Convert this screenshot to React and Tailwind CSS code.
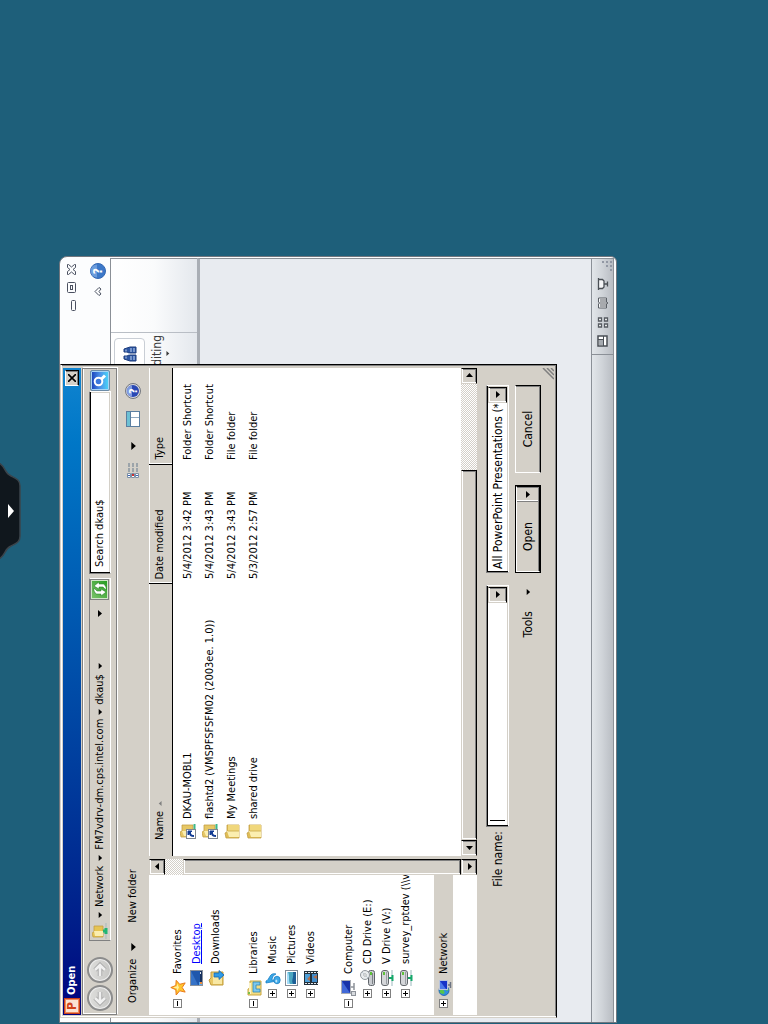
import React from "react";
import clsx from "clsx";

const raised =
  "bg-[#d4d0c8] border border-t-[#d4d0c8] border-l-[#d4d0c8] border-r-black border-b-black shadow-[inset_1px_1px_#fff,inset_-1px_-1px_#808080]";
const raisedButton =
  "bg-[#d4d0c8] border border-t-white border-l-white border-r-black border-b-black shadow-[inset_-1px_-1px_#808080]";
const sunken =
  "bg-white border border-t-[#808080] border-l-[#808080] border-r-white border-b-white shadow-[inset_1px_1px_#000,inset_-1px_-1px_#d4d0c8]";
const dither =
  "bg-[repeating-conic-gradient(#d4d0c8_0_25%,#fff_0_50%)] bg-size-[2px_2px]";

const tree = [
  {
    label: "Favorites",
    icon: "star",
    mark: "minus",
    items: [
      { label: "Desktop", icon: "desktop", active: true },
      { label: "Downloads", icon: "downloads" },
    ],
  },
  {
    label: "Libraries",
    icon: "libraries",
    mark: "minus",
    items: [
      { label: "Music", icon: "music", mark: "plus" },
      { label: "Pictures", icon: "pictures", mark: "plus" },
      { label: "Videos", icon: "videos", mark: "plus" },
    ],
  },
  {
    label: "Computer",
    icon: "computer",
    mark: "minus",
    items: [
      { label: "CD Drive (E:)", icon: "cd", mark: "plus" },
      { label: "V Drive (V:)", icon: "netdrive", mark: "plus" },
      { label: "survey_rptdev (\\\\v", icon: "netdrive", mark: "plus" },
    ],
  },
  { label: "Network", icon: "network", mark: "plus", selected: true, items: [] },
];

const files = [
  { name: "DKAU-MOBL1", date: "5/4/2012 3:42 PM", type: "Folder Shortcut", icon: "shortcut" },
  {
    name: "flashtd2 (VMSPFSFSFM02 (2003ee. 1.0))",
    date: "5/4/2012 3:43 PM",
    type: "Folder Shortcut",
    icon: "shortcut",
  },
  { name: "My Meetings", date: "5/4/2012 3:43 PM", type: "File folder", icon: "folder" },
  { name: "shared drive", date: "5/3/2012 2:57 PM", type: "File folder", icon: "folder" },
];

const drawings = {
  star: (
    <>
      <path
        d="M8.500.8l2 5 5.200.4-4 3.500 1.400 5.500-4.600-3-4.600 3 1.300-5.500L1 6.200l5.300-.4z"
        fill="#ffc62e"
        stroke="#ea7a1a"
      />
      <path d="M8.500 3l1.200 3.800 2.800.3L8.500 9 5 7.100l2.400-.3z" fill="#fff0a0" />
    </>
  ),
  desktop: (
    <>
      <rect x="0.500" y="1.500" width="15" height="12" fill="#1f57ac" stroke="#8b929c" />
      <path d="M1 2h14L1 9z" fill="#3673c8" />
      <rect x="1" y="11" width="14" height="2" fill="#17325f" />
      <rect x="1" y="10" width="3" height="3" fill="#5fa8e8" />
      <rect x="2" y="11" width="2" height="2" fill="#f08c3c" />
      <rect x="12" y="11" width="2" height="1" fill="#dfe9f5" />
    </>
  ),
  downloads: (
    <>
      <path d="M1 3l5-2 2 2h6v12H1z" fill="#e8c765" stroke="#c19b3a" />
      <path d="M2 5h11v9H2z" fill="#f8e8a4" />
      <path d="M9 6h4v5h2.500L11 16l-4.500-5H9z" fill="#2f9be8" stroke="#1565ac" strokeWidth="0.800" />
    </>
  ),
  libraries: (
    <>
      <path d="M1 2h6l1 2h7v11H1z" fill="#f3dc83" stroke="#c9a63f" />
      <path d="M2 3h11v2H2z" fill="#fcf3c4" />
      <path d="M2 2h2v2H2z" fill="#7cc04a" />
      <path d="M4 14V7h10v7h-3v-4H7v4z" fill="#7cc8ef" stroke="#2b86b8" strokeWidth="0.800" />
    </>
  ),
  music: (
    <>
      <path d="M3 1h2c1 4 9 3 7 10-1-3-4-4-6.500-4L7 12H5z" fill="#38a6e6" stroke="#1c7fc4" strokeWidth="0.800" />
      <ellipse cx="6" cy="12" rx="3.800" ry="3.200" fill="#3fa9e8" stroke="#1c7fc4" strokeWidth="0.800" />
      <ellipse cx="5" cy="11.300" rx="1.600" ry="1" fill="#bfe6fb" />
    </>
  ),
  pictures: (
    <>
      <rect x="0.500" y="1.500" width="15" height="12" fill="#fff" stroke="#818b96" />
      <rect x="2" y="3" width="12" height="9" fill="#a4dcf8" />
      <path d="M2 6c4-2 8 0 12-2v8H2z" fill="#4ba6c0" />
      <path d="M2 9c4-2 6 1 12 0v3H2z" fill="#1d5f96" />
    </>
  ),
  videos: (
    <>
      <rect x="1" y="1" width="14" height="14" fill="#23303a" />
      <rect x="4" y="2" width="8" height="5" fill="#4d9fd8" />
      <rect x="4" y="9" width="8" height="5" fill="#3f8ccc" />
      <path d="M5 7l2-3 3 3zM7 14l2-4 2 4z" fill="#b46d48" />
      <path d="M2.500 2v13M13.500 2v13" stroke="#e4e9ee" strokeDasharray="2 1" />
    </>
  ),
  computer: (
    <>
      <rect x="2.500" y="0.500" width="13" height="9" fill="#1733a8" stroke="#a9adb5" />
      <path d="M3 1h12L3 9z" fill="#4169d8" />
      <path d="M9 10v3M6 13h7" stroke="#8d9299" strokeWidth="1.500" />
      <rect x="0.500" y="10.500" width="4" height="4" fill="#d8dbdf" stroke="#8d9299" />
    </>
  ),
  cd: (
    <>
      <rect x="0.500" y="8.500" width="15" height="6" rx="2" fill="#c9ccd0" stroke="#5f6469" />
      <path d="M2 12.500h11" stroke="#7d8287" />
      <rect x="11" y="10" width="3" height="2" fill="#5fc13a" />
      <circle cx="11" cy="5" r="4.500" fill="#e9ecee" stroke="#93989e" />
      <path d="M11 5l3-3M11 5l-3 3" stroke="#bfc8d0" />
      <circle cx="11" cy="5" r="1.300" fill="#fff" stroke="#888d92" strokeWidth="0.600" />
    </>
  ),
  netdrive: (
    <>
      <rect x="0.500" y="2.500" width="15" height="7" rx="2.500" fill="#d4d6d9" stroke="#63676c" />
      <path d="M2 7.500h12" stroke="#9a9ea3" />
      <rect x="11" y="4" width="3" height="2" fill="#5fc13a" />
      <path d="M0 13h16" stroke="#9cb8bd" />
      <path d="M8 10v3M5 13.500h6" stroke="#15a86a" strokeWidth="2" />
    </>
  ),
  network: (
    <>
      <circle cx="5.500" cy="8" r="5" fill="#2f8fe0" stroke="#1a5aa8" strokeWidth="0.800" />
      <path d="M3 4c3-1 4 1 3 3S2 9 2 7zM5 10c2 0 3 2 1 3z" fill="#58c64a" />
      <rect x="6.500" y="3.500" width="9" height="8" fill="#1733c8" stroke="#b8c4dc" />
      <path d="M7 4h8L7 10z" fill="#4b78ea" />
      <path d="M11 12v2M8 14.500h6" stroke="#6b7382" strokeWidth="1.500" />
    </>
  ),
  folder: (
    <>
      <path d="M1 2l5-1 1 2h7v12H1z" fill="#e0bd55" stroke="#c3a044" strokeWidth="0.800" />
      <path d="M2 5l6-2v12H2z" fill="#fbeeb0" />
      <path d="M8 4h6v11H8z" fill="#f0d77c" />
      <path d="M8 4v11" stroke="#c9a84b" strokeWidth="0.800" />
    </>
  ),
  shortcut: (
    <>
      <path d="M2 1l5-1 1 2h6v11H2z" fill="#e6c765" stroke="#c3a044" strokeWidth="0.800" />
      <path d="M3 4l5-2v10H3z" fill="#fbeeb0" />
      <path d="M9 14.500h6" stroke="#3db88a" strokeWidth="2" />
      <rect x="0.500" y="6.500" width="9" height="9" fill="#fff" stroke="#7f868e" />
      <path d="M3 14c0-3 1-4 3-4" stroke="#123c94" strokeWidth="2" />
      <path d="M4 8h4v4z" fill="#123c94" stroke="#123c94" />
    </>
  ),
  netfolder: (
    <>
      <path d="M2 1l4-1 1 2h6v9H2z" fill="#e6c452" stroke="#c3a044" strokeWidth="0.800" />
      <path d="M3 3l5-1v9H3z" fill="#fbeeb0" />
      <path d="M0 14h16" stroke="#a9b9bb" />
      <path d="M8 11v3M5 14h6" stroke="#22b573" strokeWidth="3" />
    </>
  ),
  help: (
    <>
      <circle cx="8" cy="8" r="7.500" fill="#d8d8dc" stroke="#73777f" />
      <circle cx="8" cy="8" r="6" fill="#2948b4" />
      <path d="M2.500 7a5.500 5.500 0 0 1 11 0z" fill="#7f9ae0" />
      <text x="8" y="12" textAnchor="middle" fontSize="11" fontWeight="bold" fill="#fff">
        ?
      </text>
    </>
  ),
  helpBlue: (
    <>
      <circle cx="8" cy="8" r="7.500" fill="#3c78c8" stroke="#3468b4" />
      <path d="M1.500 7a6.500 6.500 0 0 1 13 0z" fill="#6b9cdc" />
      <text x="8" y="12" textAnchor="middle" fontSize="12" fontWeight="bold" fill="#fff">
        ?
      </text>
    </>
  ),
  preview: (
    <>
      <rect x="0.500" y="1.500" width="15" height="13" fill="#fff" stroke="#5a7ea0" />
      <rect x="1" y="2" width="14" height="3" fill="#6cc0d4" />
      <path d="M1 5.500h14" stroke="#5a7ea0" />
      <path d="M9.500 6v8" stroke="#8fa8bf" />
    </>
  ),
  views: (
    <>
      <path d="M.5 2.500h4v3h-4zM.5 6.500h4v3h-4zM.5 10.500h4v3h-4z" fill="#fff" stroke="#7b8fa5" />
      <path d="M6 4h10M6 8h10M6 12h10" stroke="#65798c" strokeDasharray="4 1" />
      <rect x="2" y="7" width="2" height="2" fill="#d03030" />
      <rect x="2" y="3" width="1" height="2" fill="#3a64b4" />
      <rect x="2" y="11" width="1" height="2" fill="#3a64b4" />
    </>
  ),
  binoculars: (
    <>
      <path d="M3 2h3v3l1 2v7H1V8zM10 2h3l2 6v6H9V7l1-2z" fill="#2c56a4" stroke="#1d3c7c" />
      <path d="M2 9h4M10 9h4M3.500 4h2M10.500 4h2M7 7h2M2 12h4M10 12h4" stroke="#c3d6f2" />
    </>
  ),
  normal: (
    <>
      <path d="M1 1h10v9H1z" fill="#fff" stroke="#4a4f55" strokeWidth="1.500" />
      <path d="M7.500 1v5M1 6.500h10" stroke="#4a4f55" />
      <path d="M2 2h5v4H2z" fill="#a5aab0" />
    </>
  ),
  sorter: (
    <path
      d="M1 1.500h3v3H1zM7 1.500h3v3H7zM1 7.500h3v3H1zM7 7.500h3v3H7z"
      fill="#fff"
      stroke="#555a60"
      strokeWidth="1.300"
    />
  ),
  reading: (
    <path
      d="M1 1.500h4l1 1 1-1h4v8H7l-1 1.500-1-1.500H1zM6 2.500v8M2 4h3M2 6h3M2 8h3M7 4h3M7 6h3M7 8h3"
      fill="#f4f5f7"
      stroke="#5a5f65"
    />
  ),
  slideshow: (
    <path
      d="M0 1.500h12M1.500 2v3.500L3 7h6l1.500-1.500V2M6 7v3M3.500 10.500h5"
      fill="#f4f5f7"
      stroke="#4a4f55"
      strokeWidth="1.300"
    />
  ),
};

const smallIcons = ["normal", "sorter", "reading", "slideshow"];

const Icon = ({ name, className = "size-4" }) => (
  <svg
    viewBox={smallIcons.includes(name) ? "0 0 12 12" : "0 0 16 16"}
    className={clsx("shrink-0", className)}
    fill="none"
    aria-hidden="true"
  >
    {drawings[name]}
  </svg>
);

const arrowPaths = {
  down: "M0 2h7L3.500 6z",
  up: "M0 5h7L3.500 1z",
  right: "M2 0v7l4-3.500z",
  left: "M5 0v7L1 3.500z",
};

const Arrow = ({ dir = "down", className = "size-[7px]" }) => (
  <svg viewBox="0 0 7 7" className={clsx("shrink-0", className)} aria-hidden="true">
    <path d={arrowPaths[dir]} fill="currentColor" />
  </svg>
);

const ScrollButton = ({ dir, label }) => (
  <button aria-label={label} className={clsx("flex size-4 shrink-0 items-center justify-center", raised)}>
    <Arrow dir={dir} />
  </button>
);

const Expander = ({ mark }) => (
  <button
    aria-label={mark === "plus" ? "Expand" : "Collapse"}
    className="flex size-[9px] shrink-0 items-center justify-center border border-[#808080] bg-white"
  >
    <svg viewBox="0 0 5 5" className="size-[5px]" aria-hidden="true">
      <path d={mark === "plus" ? "M0 2.500h5M2.500 0v5" : "M0 2.500h5"} stroke="#000" />
    </svg>
  </button>
);

const TreeRow = ({ item, child }) => (
  <div
    className={clsx(
      "flex h-[19px] items-center gap-[2px] whitespace-nowrap",
      child ? "pl-[17px]" : "pl-[7px]",
      item.selected && "bg-[#d4d0c8]"
    )}
  >
    <span className="flex w-[10px] shrink-0">{item.mark && <Expander mark={item.mark} />}</span>
    <Icon name={item.icon} />
    <a
      href="#"
      className={clsx("pl-1", item.active ? "text-[#0000ff] underline" : "text-black")}
    >
      {item.label}
    </a>
  </div>
);

const NavPane = () => (
  <div className="flex w-[156px] shrink-0">
    <nav className="flex flex-1 flex-col gap-[19px] overflow-hidden bg-white pt-[19px]">
      {tree.map((group) => (
        <div key={group.label}>
          <TreeRow item={group} />
          {group.items.map((item) => (
            <TreeRow key={item.label} item={item} child />
          ))}
        </div>
      ))}
    </nav>
    <div className="flex w-4 flex-col">
      <ScrollButton dir="up" label="Scroll up" />
      <div className={clsx("h-[18px]", dither)} />
      <div className={clsx("flex-1", raised)} />
      <ScrollButton dir="down" label="Scroll down" />
    </div>
  </div>
);

const FileList = () => (
  <div className="flex min-w-0 flex-1 flex-col bg-white">
    <div className="flex-1">
      <table className="w-full table-fixed border-collapse text-left">
        <colgroup>
          <col className="w-[272px]" />
          <col className="w-[119px]" />
          <col />
        </colgroup>
        <thead>
          <tr className="h-[23px] bg-[#d4d0c8] shadow-[inset_0_1px_#fff]">
            <th className="border-r border-b border-black pl-4 font-normal">
              <span className="flex items-center gap-[5px]">
                Name
                <Arrow dir="up" className="size-[5px] text-[#808080]" />
              </span>
            </th>
            <th className="border-r border-b border-black pl-1 font-normal shadow-[inset_1px_1px_#fff]">
              Date modified
            </th>
            <th className="border-b border-black pl-[5px] font-normal shadow-[inset_1px_1px_#fff]">
              Type
            </th>
          </tr>
        </thead>
        <tbody className="before:block before:h-1">
          {files.map((file) => (
            <tr key={file.name} className="h-[22px] whitespace-nowrap">
              <td className="pl-[17px]">
                <span className="flex items-center gap-1">
                  <Icon name={file.icon} />
                  {file.name}
                </span>
              </td>
              <td className="pl-[5px]">{file.date}</td>
              <td className="pl-[5px]">{file.type}</td>
            </tr>
          ))}
        </tbody>
      </table>
    </div>
    <div className="flex h-4">
      <ScrollButton dir="left" label="Scroll left" />
      <div className={clsx("flex-[370]", raised)} />
      <div className={clsx("flex-[86]", dither)} />
      <ScrollButton dir="right" label="Scroll right" />
    </div>
  </div>
);

const RoundButton = ({ label, d }) => (
  <button
    aria-label={label}
    className="flex size-[26px] items-center justify-center rounded-full border-2 border-[#8c8c8c] bg-linear-to-b from-[#dededc] to-[#c6c6c4] shadow-[inset_0_0_0_1px_#eee]"
  >
    <svg viewBox="0 0 16 16" className="size-4" fill="none" aria-hidden="true">
      <path d={d} stroke="#acacac" strokeWidth="4.500" />
      <path d={d} stroke="#f0f0f0" strokeWidth="2.500" />
    </svg>
  </button>
);

const AddressBar = () => (
  <div className="flex h-[35px] items-center border border-[#808080] pr-px shadow-[inset_1px_1px_#fff,1px_1px_#fff]">
    <div className="flex w-[73px] shrink-0 gap-[2px] pl-[3px]">
      <RoundButton label="Back" d="M14 8H3M8 3L3 8l5 5" />
      <RoundButton label="Forward" d="M2 8h11M8 3l5 5-5 5" />
    </div>
    <div className="flex h-[22px] min-w-0 flex-1 items-center border border-t-[#808080] border-r-white border-b-white border-l-[#808080] pl-px">
      <Icon name="netfolder" />
      <div className="flex flex-1 items-center whitespace-nowrap">
        <Arrow className="mx-[5px] size-[6px]" />
        <a href="#">Network</a>
        <Arrow className="mx-[5px] size-[6px]" />
        <a href="#">FM7vdrv-dm.cps.intel.com</a>
        <Arrow className="mx-1 size-[6px]" />
        <a href="#">dkau$</a>
        <Arrow className="mx-[5px] size-[6px]" />
      </div>
      <Arrow />
      <button
        aria-label="Refresh"
        className="ml-[10px] flex h-[19px] w-[21px] items-center justify-center border border-[#808080] bg-linear-to-br from-[#7cc46c] to-[#189c18] shadow-[inset_0_0_0_1px_#d0e8c8]"
      >
        <svg viewBox="0 0 16 16" className="size-4" aria-hidden="true">
          <path
            d="M5 14L1 9h2V4l3-2h3L6 5v4h2zM11 2l4 5h-2v5l-3 2H7l3-3V7H8z"
            fill="#fff"
            stroke="#1c7a1c"
            strokeWidth="0.500"
          />
        </svg>
      </button>
    </div>
    <div className="ml-1 flex w-[204px] items-center">
      <input
        type="text"
        aria-label="Search dkau$"
        placeholder="Search dkau$"
        className={clsx("h-[22px] min-w-0 flex-1 pl-[6px] placeholder:text-black placeholder:opacity-100", sunken)}
      />
      <button
        aria-label="Search"
        className="flex h-5 w-[21px] items-center justify-center rounded-xs border border-[#6c8ca8] bg-linear-to-b from-[#1c3cb8] via-[#4c90e8] to-[#48d8f8] shadow-[inset_0_0_0_1px_#a8d4f4]"
      >
        <svg viewBox="0 0 16 16" className="size-4" fill="none" aria-hidden="true">
          <path d="M12.500 13l-4-4" stroke="#fff" strokeWidth="3" />
          <circle cx="6.500" cy="6.500" r="3.800" fill="#3a78dc" stroke="#fff" strokeWidth="2" />
        </svg>
      </button>
    </div>
  </div>
);

const Toolbar = () => (
  <div className="flex h-8 items-center pr-[15px] pl-3">
    <button className="flex items-center gap-2">
      Organize
      <Arrow className="size-2" />
    </button>
    <button className="ml-5">New folder</button>
    <button aria-label="Change view" className="ml-auto flex items-center gap-3">
      <Icon name="views" />
      <Arrow className="size-2" />
    </button>
    <button aria-label="Preview pane" className="ml-[15px]">
      <Icon name="preview" />
    </button>
    <button aria-label="Help" className="ml-3">
      <Icon name="help" />
    </button>
  </div>
);

const FooterPanel = () => (
  <div className="relative grid grid-cols-[1fr_242px_188px] gap-x-3 gap-y-[6px] pt-[9px] pr-[17px] pb-[13px] text-[12px]">
    <label htmlFor="file-name" className="-mr-2 flex items-center justify-end whitespace-nowrap">
      File name:
    </label>
    <div className={clsx("flex h-[23px] items-center p-px", sunken)}>
      <span className="ml-1 h-[15px] w-px bg-black" />
      <input id="file-name" type="text" className="h-full min-w-0 flex-1 bg-transparent" />
      <button aria-label="Recent files" className={clsx("flex h-[19px] w-4 items-center justify-center", raised)}>
        <Arrow />
      </button>
    </div>
    <div className={clsx("relative h-[23px] p-px", sunken)}>
      <select aria-label="File type" className="h-full w-full appearance-none overflow-hidden pr-[17px] pl-[2px]">
        <option>All PowerPoint Presentations (*</option>
      </select>
      <span
        className={clsx(
          "pointer-events-none absolute top-px right-px flex h-[19px] w-4 items-center justify-center",
          raised
        )}
      >
        <Arrow />
      </span>
    </div>
    <div className="col-span-2 flex h-[26px] items-center justify-end pr-1">
      <button className="flex items-center gap-4">
        Tools
        <Arrow className="size-[6px]" />
      </button>
    </div>
    <div className="flex h-[26px] gap-3">
      <div className="flex flex-1 border border-black">
        <div className={clsx("flex flex-1 pr-px pb-px", raisedButton)}>
          <button className="flex-1">Open</button>
          <button
            aria-label="Open options"
            className="flex w-[14px] items-center justify-center border-l border-[#808080] shadow-[inset_1px_0_#fff]"
          >
            <Arrow />
          </button>
        </div>
      </div>
      <button className={clsx("flex-1", raisedButton)}>Cancel</button>
    </div>
    <svg viewBox="0 0 12 12" className="absolute right-0 bottom-0 size-3" aria-hidden="true">
      <path d="M1 12L12 1M5 12l7-7M9 12l3-3" stroke="#808080" strokeWidth="1.500" />
    </svg>
  </div>
);

const OpenDialog = () => (
  <section
    aria-label="Open"
    className="absolute top-0 right-[107px] bottom-[59px] left-1 flex flex-col border border-t-[#d4d0c8] border-r-black border-b-black border-l-[#d4d0c8] bg-[#d4d0c8] p-[2px] pr-[3px] shadow-[inset_1px_1px_#fff,inset_-1px_-1px_#808080]"
  >
    <header className="flex h-[18px] shrink-0 items-center bg-linear-to-r from-[#00007e] to-[#1084d0] pr-[2px] pl-px font-bold text-white">
      <span className="flex size-4 items-center justify-center border border-[#c8401c] bg-[#fbe3d4] text-[12px] text-[#d2431a] shadow-[inset_0_0_0_1px_#ef8a5c]">
        P
      </span>
      <h1 className="flex-1 pl-[3px]">Open</h1>
      <button
        aria-label="Close"
        className={clsx("flex h-[14px] w-4 items-center justify-center text-black", raisedButton)}
      >
        <svg viewBox="0 0 8 8" className="size-2" aria-hidden="true">
          <path d="M0 0l8 8M8 0L0 8" stroke="#000" strokeWidth="1.600" />
        </svg>
      </button>
    </header>
    <div className="flex min-h-0 flex-1 flex-col pt-px">
      <AddressBar />
      <Toolbar />
      <div className="flex min-h-0 flex-1 gap-[3px]">
        <NavPane />
        <FileList />
      </div>
      <FooterPanel />
    </div>
  </section>
);

const Presentation = () => (
  <main className="relative flex h-full flex-col rounded-tr-lg rounded-br-md border border-[#70767e] bg-[#fcfdfe] pr-px pb-[2px]">
    <div className="flex h-[22px] items-center justify-end gap-[7px] pr-[6px] text-[#4a5060]">
      <button aria-label="Minimize">
        <svg viewBox="0 0 11 11" className="size-[11px]" fill="none" stroke="currentColor" aria-hidden="true">
          <rect x="0.500" y="5.500" width="10" height="4" rx="1" />
        </svg>
      </button>
      <button aria-label="Restore">
        <svg viewBox="0 0 11 11" className="size-[11px]" fill="none" stroke="currentColor" aria-hidden="true">
          <rect x="0.500" y="1.500" width="10" height="8" rx="1" />
          <rect x="3.500" y="4.500" width="4" height="2" />
        </svg>
      </button>
      <button aria-label="Close window">
        <svg viewBox="0 0 11 11" className="size-[11px]" fill="none" stroke="currentColor" aria-hidden="true">
          <path d="M.5 1.500h3l2 2.500 2-2.500h3v1L8 5.500l2.500 3v1h-3l-2-2.500-2 2.500h-3v-1L3 5.500l-2.500-3z" />
        </svg>
      </button>
    </div>
    <div className="flex h-7 items-center justify-end gap-2 pt-1 pr-[5px] text-[#4a5060]">
      <button aria-label="Minimize the ribbon">
        <svg viewBox="0 0 9 8" className="h-2 w-[9px]" fill="none" stroke="currentColor" aria-hidden="true">
          <path d="M4.500 1l4 4-1.500 2-2.500-2L2 7 .5 5z" />
        </svg>
      </button>
      <button aria-label="Help">
        <Icon name="helpBlue" />
      </button>
    </div>
    <div className="flex h-[87px] shrink-0 justify-end border-t border-r border-[#8b9097] bg-linear-to-b from-white via-[#fafbfc] to-[#e4e8ed]">
      <div className="flex w-[60px] flex-col border-r border-[#b9bec5] pt-[3px] pr-[5px] text-[#3b3b3b]">
        <button
          aria-label="Find"
          className="flex h-[31px] items-center justify-end rounded-sm border border-[#c9ced5] bg-white pr-[7px]"
        >
          <Icon name="binoculars" />
        </button>
        <button className="flex flex-col items-end pt-[5px] text-[12px]">
          <span className="-mr-[3px]">Editing</span>
          <Arrow className="mt-px mr-[13px] size-[5px]" />
        </button>
      </div>
      <div className="w-[73px]" />
    </div>
    <div className="flex-1 border-t-[3px] border-r border-t-[#a9aeb5] border-r-[#8b9097] bg-[#e8ebf0]" />
    <footer className="flex h-[23px] shrink-0 items-center justify-end gap-[7px] border-t border-r border-b border-[#8b9097] bg-linear-to-b from-[#e2e6ea] via-[#cfd3d8] to-[#b9bdc3]">
      <span className="h-full border-l border-[#8b9097]" />
      <button aria-label="Normal">
        <Icon name="normal" className="size-3" />
      </button>
      <button aria-label="Slide sorter">
        <Icon name="sorter" className="size-3" />
      </button>
      <button aria-label="Reading view">
        <Icon name="reading" className="size-3" />
      </button>
      <button aria-label="Slide show">
        <Icon name="slideshow" className="size-3" />
      </button>
      <svg viewBox="0 0 12 12" className="size-3 self-end" aria-hidden="true">
        <path d="M8 1h2v2H8zM8 5h2v2H8zM4 5h2v2H4zM8 9h2v2H8zM4 9h2v2H4zM0 9h2v2H0z" fill="#9298a4" />
      </svg>
    </footer>
    <OpenDialog />
  </main>
);

const PullTab = () => (
  <button aria-label="Show session toolbar" className="absolute top-0 left-1/2 -translate-x-[47px]">
    <svg viewBox="0 0 96 22" className="h-[22px] w-24" aria-hidden="true">
      <path
        d="M0-1c4 7 10 5 13 12 3 6 4 9 10 9h50c6 0 7-3 10-9 3-7 9-5 13-12z"
        fill="#10171d"
        stroke="#3b444b"
        strokeWidth="1.500"
      />
      <path d="M41 8h14l-7 6z" fill="#fff" />
    </svg>
  </button>
);

// The remote desktop is landscape and shown on a device held upright.
export default function App() {
  return (
    <div className="h-screen w-full overflow-hidden bg-[#1e5f7a]">
      <div className="relative h-[100vw] w-[100vh] origin-top-left translate-y-[100vh] -rotate-90 overflow-hidden bg-[#1e5f7a] pt-[59px] pr-[256px] pb-[151px] pl-px font-['DejaVu_Sans_Condensed','Noto_Sans',sans-serif] text-[11px] leading-[14px] text-black">
        <PullTab />
        <Presentation />
      </div>
    </div>
  );
}
